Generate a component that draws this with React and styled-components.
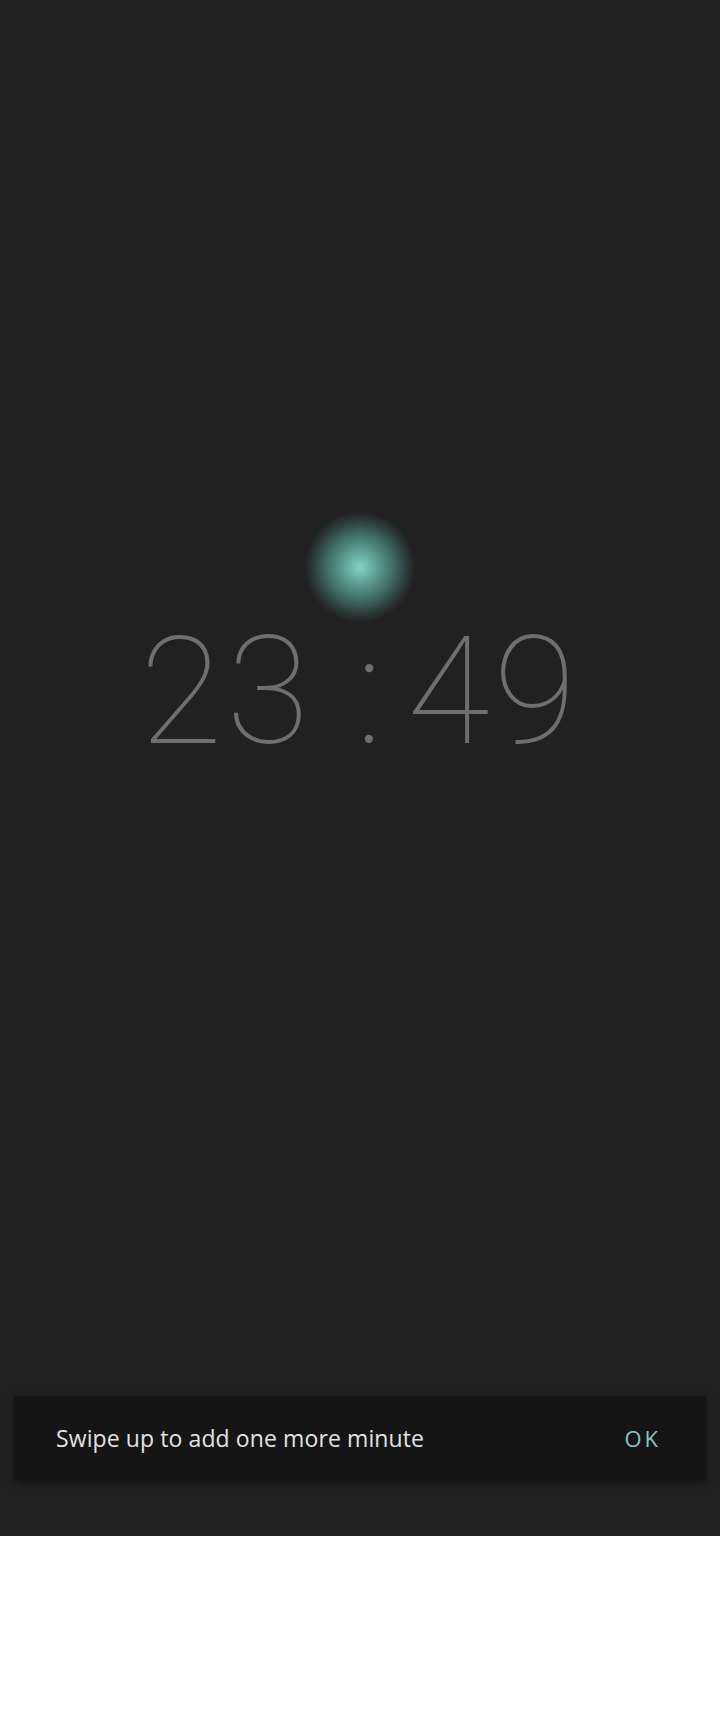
import React from "react";
import styled, { createGlobalStyle } from "styled-components";

const Global = createGlobalStyle`
  html, body { margin: 0; padding: 0; background: #ffffff; }
  * { box-sizing: border-box; }
`;

const Screen = styled.div`
  width: 720px;
  height: 1536px;
  background: #212121;
  display: flex;
  flex-direction: column;
  align-items: center;
  font-family: Roboto, "Noto Sans", sans-serif;
`;

const Center = styled.div`
  margin-top: 512px;
  position: relative;
  display: flex;
  flex-direction: column;
  align-items: center;
`;

const Glow = styled.div`
  width: 110px;
  height: 110px;
  border-radius: 50%;
  background: radial-gradient(
    circle closest-side at center,
    #82d3c8 0%,
    #5f9f97 30%,
    #42706a 58%,
    #2c3c3a 85%,
    #222222 100%
  );
`;

const Clock = styled.div`
  margin-top: -6px;
  display: flex;
  align-items: baseline;
  color: #6f6f6f;
  font-weight: 100;
  font-size: 151px;
  line-height: 1;
`;

const Digits = styled.span`
  letter-spacing: 4px;
`;

const Colon = styled.span`
  margin: 0 ${(p) => p.$right}px 0 ${(p) => p.$left}px;
`;

const Spacer = styled.div`
  flex: 1;
`;

const Snackbar = styled.div`
  width: 692px;
  height: 84px;
  margin-bottom: 56px;
  background: #151515;
  box-shadow: 0 3px 8px rgba(0, 0, 0, 0.45);
  display: flex;
  align-items: center;
  justify-content: space-between;
  padding: 0 45px 0 42px;
`;

const Message = styled.span`
  color: #e2e2e2;
  font-family: "Open Sans", "Noto Sans", sans-serif;
  font-size: 23px;
  letter-spacing: 0.1px;
`;

const Action = styled.span`
  color: #7ecbc0;
  font-family: "Open Sans", "Noto Sans", sans-serif;
  font-size: 22px;
  letter-spacing: 3px;
`;

export default function App() {
  return (
    <>
      <Global />
      <Screen>
        <Center>
          <Glow />
          <Clock>
            <Digits>23</Digits>
            <Colon $left={43} $right={24}>:</Colon>
            <Digits>49</Digits>
          </Clock>
        </Center>
        <Spacer />
        <Snackbar>
          <Message>Swipe up to add one more minute</Message>
          <Action>OK</Action>
        </Snackbar>
      </Screen>
    </>
  );
}
